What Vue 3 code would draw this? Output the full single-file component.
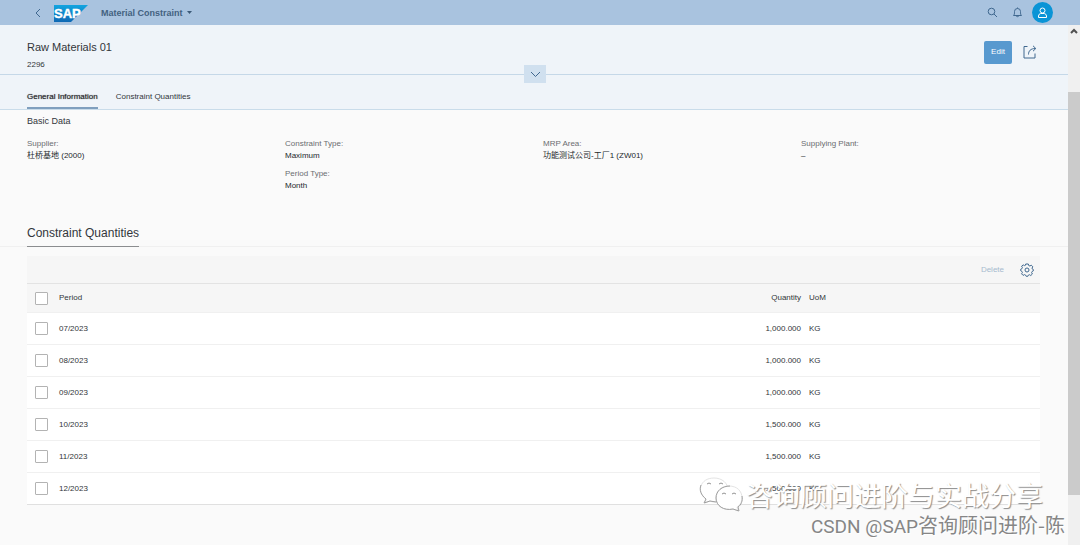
<script setup>
import { ref } from 'vue'

const tabs = ['General Information', 'Constraint Quantities']
const activeTab = ref(tabs[0])

const fieldGroups = [
  [{ label: 'Supplier:', value: '杜桥基地 (2000)' }],
  [
    { label: 'Constraint Type:', value: 'Maximum' },
    { label: 'Period Type:', value: 'Month' },
  ],
  [{ label: 'MRP Area:', value: '功能测试公司-工厂1 (ZW01)' }],
  [{ label: 'Supplying Plant:', value: '–' }],
]

const rows = ref([
  { period: '07/2023', quantity: '1,000.000', uom: 'KG', selected: false },
  { period: '08/2023', quantity: '1,000.000', uom: 'KG', selected: false },
  { period: '09/2023', quantity: '1,000.000', uom: 'KG', selected: false },
  { period: '10/2023', quantity: '1,500.000', uom: 'KG', selected: false },
  { period: '11/2023', quantity: '1,500.000', uom: 'KG', selected: false },
  { period: '12/2023', quantity: '1,500.000', uom: 'KG', selected: false },
])

function toggleAll(event) {
  rows.value.forEach((row) => { row.selected = event.target.checked })
}
</script>

<template>
  <div class="app">
    <header class="shell">
      <button class="icon-btn back" type="button" aria-label="Back">
        <svg width="8" height="12" viewBox="0 0 8 12"><path d="M6 2 2 6l4 4" /></svg>
      </button>
      <svg class="logo" width="34" height="17" viewBox="0 0 34 17" role="img" aria-label="SAP">
        <defs>
          <linearGradient id="sapBlue" x1="0" y1="0" x2="0" y2="1">
            <stop offset="0" stop-color="#12a5e0" />
            <stop offset="1" stop-color="#0f68b4" />
          </linearGradient>
        </defs>
        <path d="M0 0H34L17 17H0Z" fill="url(#sapBlue)" />
        <text x="0" y="13" class="logo-text">SAP</text>
      </svg>
      <button class="app-title" type="button">
        Material Constraint
        <svg width="5" height="3" viewBox="0 0 5 3"><path d="M0 0h5L2.5 3Z" /></svg>
      </button>
      <div class="shell-actions">
        <button class="icon-btn" type="button" aria-label="Search">
          <svg width="11" height="11" viewBox="0 0 11 11"><circle cx="4.5" cy="4.5" r="3.3" /><path d="m7 7 3 3" /></svg>
        </button>
        <button class="icon-btn" type="button" aria-label="Notifications">
          <svg width="11" height="11" viewBox="0 0 11 11"><path d="M1.500 8.500C2.500 7.500 2.500 6.500 2.500 4.500a3 3 0 0 1 6 0c0 2 0 3 1 4Zm2.800 0a1.200 1.200 0 0 0 2.400 0M5.500.5v1" /></svg>
        </button>
        <button class="avatar" type="button" aria-label="User">
          <svg width="11" height="12" viewBox="0 0 11 12"><circle cx="5.500" cy="3.500" r="2.500" /><path d="M1.500 10.500V9q0-2 2.200-2.500h3.600Q9.500 7 9.500 9v1.500Z" /></svg>
        </button>
      </div>
    </header>

    <div class="body">
      <main class="page">
        <section class="object-header">
          <div>
            <h1>Raw Materials 01</h1>
            <p>2296</p>
          </div>
          <div class="object-actions">
            <button class="edit" type="button">Edit</button>
            <button class="icon-btn" type="button" aria-label="Share">
              <svg width="14" height="14" viewBox="0 0 14 14"><path d="M4.500 1.500H1v11.500h11V8.500M5.500 9.500C5.500 6 7.500 3.500 12.500 3.500M10 .8 12.800 3.500 10 6.200" /></svg>
            </button>
          </div>
          <button class="expand" type="button" aria-label="Expand header">
            <svg width="11" height="7" viewBox="0 0 11 7"><path d="m1 1 4.500 4.500L10 1" /></svg>
          </button>
        </section>

        <nav class="tabs">
          <button
            v-for="tab in tabs"
            :key="tab"
            type="button"
            :class="{ active: tab === activeTab }"
            @click="activeTab = tab"
          >{{ tab }}</button>
        </nav>

        <section class="basic">
          <h2>Basic Data</h2>
          <div class="fields">
            <dl v-for="(group, index) in fieldGroups" :key="index">
              <div v-for="field in group" :key="field.label">
                <dt>{{ field.label }}</dt>
                <dd>{{ field.value }}</dd>
              </div>
            </dl>
          </div>
        </section>

        <div class="section-title"><h2>Constraint Quantities</h2></div>

        <section class="quantities">
          <div class="toolbar">
            <button class="delete" type="button" disabled>Delete</button>
            <button class="icon-btn" type="button" aria-label="Settings">
              <svg width="14" height="14" viewBox="0 0 14 14"><path d="M5.700 1h2.600l.4 1.500 1.200.5 1.400-.8 1.500 1.600-.8 1.300.5 1.100L13.300 6.500v1.400l-1.200.6-.5 1.100.8 1.400-1.600 1.500-1.400-.8-1.100.5L7.800 13.300H6.200l-.6-1.200-1.100-.5-1.400.8-1.500-1.600.8-1.300-.5-1.100L.7 7.700V6.300l1.200-.6.5-1.100-.8-1.400 1.600-1.300 1.300.7 1-.4Z" /><circle cx="7" cy="7" r="2" /></svg>
            </button>
          </div>
          <table>
            <colgroup><col class="c-check"><col><col class="c-qty"><col class="c-uom"></colgroup>
            <thead>
              <tr>
                <th><input type="checkbox" aria-label="Select all" @change="toggleAll"></th>
                <th>Period</th>
                <th class="num">Quantity</th>
                <th>UoM</th>
              </tr>
            </thead>
            <tbody>
              <tr v-for="row in rows" :key="row.period">
                <td><input v-model="row.selected" type="checkbox" :aria-label="'Select ' + row.period"></td>
                <td>{{ row.period }}</td>
                <td class="num">{{ row.quantity }}</td>
                <td>{{ row.uom }}</td>
              </tr>
            </tbody>
          </table>
        </section>
      </main>

      <div class="scrollbar" aria-hidden="true">
        <svg width="8" height="6" viewBox="0 0 8 6"><path d="m1 5 3-3 3 3" /></svg>
        <div class="thumb"></div>
      </div>
    </div>

    <div class="watermark">
      <div class="channel">
        <svg width="44" height="36" viewBox="0 0 44 36">
          <path class="bubble" d="M15 1c8 0 14 5 14 12s-6 12-14 12q-2 0-4-1l-5 2 1-4C-3 15 1 1 15 1Z" />
          <path class="shade" d="M2 8c-2 5 0 10 5 14l-2 4 6-2 6 1" />
          <path class="bubble" d="M30 9c8 0 13 5 13 12 0 4-2 7-5 9l1 4-5-2c-9 2-17-3-17-11 0-7 5-12 13-12Z" />
          <path class="shade" d="M31 9c-8 0-14 5-14 12 0 8 8 13 17 11l6 2-1-4c3-2 5-6 4-11" />
          <path class="eyes" d="M8 7q2-2 4 0M20 7q2-2 4 0M23 17q2-2 4 0M33 17q2-2 4 0" />
        </svg>
        <span>咨询顾问进阶与实战分享</span>
      </div>
      <div class="author"><span>CSDN @SAP</span>咨询顾问进阶-陈</div>
    </div>
  </div>
</template>

<style>
body {
  margin: 0;
}
</style>

<style scoped>
.app {
  position: relative;
  display: flex;
  flex-direction: column;
  min-height: 100vh;
  overflow: hidden;
  background: #fafafa;
  color: #32363a;
  font: 8px/12px "Liberation Sans", "Noto Sans CJK SC", sans-serif;
}
h1, h2, p, dl, dd {
  margin: 0;
  font-weight: 400;
}
button {
  border: 0;
  padding: 0;
  background: none;
  color: inherit;
  font: inherit;
  cursor: pointer;
}
svg {
  display: block;
}
.icon-btn path, .icon-btn circle, .avatar path, .avatar circle, .expand path, .scrollbar path {
  fill: none;
  stroke: #40688f;
  stroke-width: 1;
}
.shell {
  display: flex;
  align-items: center;
  height: 25px;
  padding: 0 27px 0 34px;
  box-sizing: border-box;
  background: #a9c3df;
}
.logo {
  margin: 1px 13px 0 12px;
}
.logo-text {
  fill: #fff;
  stroke: #fff;
  stroke-width: 0.4px;
  font: bold 13px "Liberation Sans", sans-serif;
}
.app-title {
  display: flex;
  align-items: center;
  gap: 4px;
  color: #43617f;
  font: bold 9px/12px "Liberation Sans", sans-serif;
}
.app-title path {
  fill: #3c5a78;
}
.shell-actions {
  display: flex;
  align-items: center;
  gap: 14px;
  margin-left: auto;
}
.avatar {
  display: grid;
  place-items: center;
  width: 21px;
  height: 21px;
  margin-left: -5px;
  border-radius: 50%;
  background: #0a94d6;
}
.avatar path, .avatar circle {
  stroke: #fff;
}
.body {
  display: flex;
  flex: 1;
}
.page {
  flex: 1;
  min-width: 0;
}
.object-header {
  position: relative;
  display: flex;
  justify-content: space-between;
  padding: 14px 31px 3px 27px;
  border-bottom: 1px solid #c5d8e8;
  background: #eff4f9;
}
.object-header h1 {
  font-size: 11px;
  line-height: 16px;
}
.object-header p {
  margin-top: 4px;
}
.object-actions {
  display: flex;
  align-items: center;
  gap: 11px;
  height: 26px;
}
.edit {
  width: 28px;
  height: 23px;
  border-radius: 2px;
  background: #5899cf;
  color: #fff;
}
.expand {
  position: absolute;
  bottom: -9px;
  left: 50%;
  display: grid;
  place-items: center;
  width: 22px;
  height: 18px;
  margin-left: -10px;
  background: #d0e0ef;
}
.tabs {
  display: flex;
  gap: 18px;
  height: 34px;
  padding: 0 27px;
  border-bottom: 1px solid #c9dcea;
  background: #eff4f9;
}
.tabs button {
  padding-top: 11px;
  border-bottom: 2px solid transparent;
}
.tabs .active {
  border-color: #7f9fbe;
  color: #1f2327;
  text-shadow: 0 0 1px #6a6d70;
}
.basic {
  min-height: 104px;
  padding: 4px 9px 0 27px;
}
.basic h2 {
  font-size: 9px;
  line-height: 14px;
}
.fields {
  display: grid;
  grid-template-columns: repeat(4, 1fr);
  margin-top: 10px;
}
.fields dl {
  display: grid;
  gap: 6px;
  align-content: start;
}
.fields dt {
  color: #6a6d70;
}
.fields dd {
  color: #24282c;
}
.section-title {
  display: flex;
  padding: 0 27px;
  border-bottom: 1px solid #f0f0f0;
}
.section-title h2 {
  margin-bottom: -1px;
  padding: 7px 0 5px;
  border-bottom: 1px solid #8b8d8f;
  font-size: 12px;
  line-height: 16px;
}
.quantities {
  margin: 9px 28px 40px 27px;
}
.toolbar {
  display: flex;
  align-items: center;
  justify-content: flex-end;
  gap: 16px;
  height: 27px;
  padding-right: 6px;
  background: #f6f6f6;
}
.delete {
  color: #a6bace;
}
table {
  width: 100%;
  border-collapse: collapse;
  table-layout: fixed;
  background: #fff;
}
.c-check {
  width: 28px;
}
.c-qty {
  width: 100px;
}
.c-uom {
  width: 235px;
}
th, td {
  height: 31px;
  padding: 0 4px;
  border-bottom: 1px solid #f0f0f0;
  font-weight: 400;
  text-align: left;
  vertical-align: middle;
}
th {
  height: 28px;
  border-top: 1px solid #e3e3e3;
  background: #f6f6f6;
}
.num {
  text-align: right;
}
tbody tr:last-child td {
  border-color: #e0e0e0;
}
input {
  display: block;
  box-sizing: border-box;
  width: 13px;
  height: 13px;
  margin: 0 4px;
  border: 1px solid #b3b3b3;
  border-radius: 1px;
  background: #fff;
  appearance: none;
}
input:checked {
  background: #5899cf;
}
.scrollbar {
  display: flex;
  flex-direction: column;
  align-items: center;
  width: 12px;
  padding-top: 3px;
  box-sizing: border-box;
  background: #f0f0f0;
}
.scrollbar path {
  stroke: #505050;
  stroke-width: 2;
}
.thumb {
  flex: 0 0 78%;
  width: 100%;
  margin-top: 58px;
  background: #cbcbcb;
}
.watermark {
  position: absolute;
  right: 15px;
  bottom: 6px;
  display: flex;
  flex-direction: column;
  align-items: flex-end;
  pointer-events: none;
  white-space: nowrap;
}
.channel {
  display: flex;
  align-items: center;
  gap: 3px;
  margin-right: 22px;
  color: #fff;
  font: 27px/36px "Noto Sans CJK SC", sans-serif;
  text-shadow: 1px 1px 1px #8c8c8c;
}
.bubble {
  fill: #fff;
  stroke: #e4e4e4;
}
.shade {
  fill: none;
  stroke: #a0a0a0;
}
.eyes {
  fill: none;
  stroke: #929292;
}
.author {
  color: #868686;
  font: 20px/24px "Noto Sans CJK SC", sans-serif;
  text-shadow: 1px 1px 1px #fff;
}
.author span {
  font: 19px/24px Roboto, sans-serif;
}
</style>
